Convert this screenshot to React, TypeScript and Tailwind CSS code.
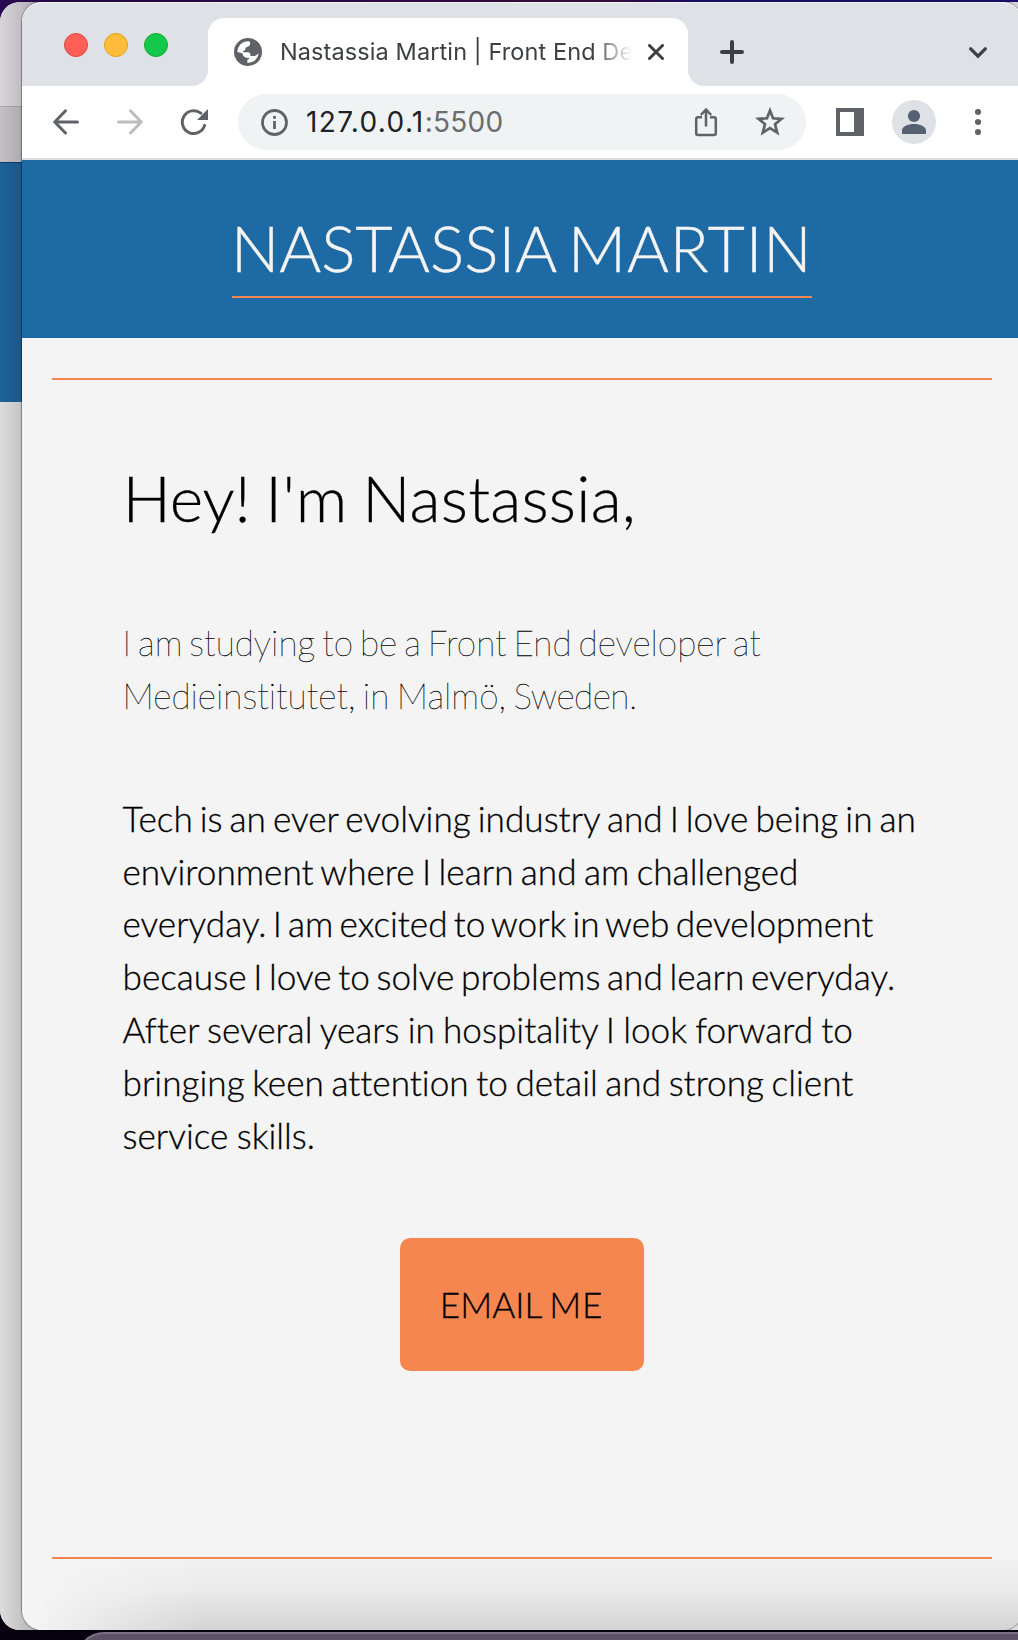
import React from "react";

function Globe() {
  return (
    <svg className="ml-[26px] size-7 shrink-0" viewBox="0 0 84 84">
      <circle cx="42" cy="42" r="42" fill="#5f6368" />
      <path
        fill="#fff"
        d="M10 42C11 24 24 10 43 10C50 10 50 19 45 24C41 28 35 26 34 31C35 37 31 38 27 39V43H42C48 44 50 48 49 54H60C66 54 69 50 74 46C73 58 64 68 54 72C49 74 43 75 40 74V65C44 65 46 62 45 59H36C29 58 27 52 25 46Z"
      />
      <path fill="#5f6368" d="M50 10C66 13 75 27 75 42C74 47 66 48 62 46C55 44 60 36 54 34C48 34 43 30 47 25C50 21 50 16 50 10Z" />
    </svg>
  );
}

function TabStrip() {
  return (
    <div className="flex h-[84px] bg-white">
      <div className="flex w-[186px] items-start gap-4 rounded-br-[16px] bg-[#dee1e6] pl-[42px] pt-[31px]">
        <span className="size-6 rounded-full border border-[#e2463f] bg-[#ff5f57]" />
        <span className="size-6 rounded-full border border-[#e1a116] bg-[#febc3a]" />
        <span className="size-6 rounded-full border border-[#12ac28] bg-[#14c84b]" />
      </div>
      <div className="w-[480px] bg-[linear-gradient(to_bottom,#dee1e6_60px,#fff_60px)] pt-4">
        <div className="flex h-[68px] items-center rounded-t-[16px] bg-white">
          <Globe />
          <div className="ml-[18px] w-[352px] overflow-hidden whitespace-nowrap text-[23.5px] leading-8 tracking-[0.1px] text-[#3c4043] [mask-image:linear-gradient(to_right,#000_312px,transparent_352px)]">
            Nastassia Martin | Front End Developer
          </div>
          <svg className="ml-4 size-4" viewBox="0 0 16 16" stroke="#3c4043" strokeWidth="3" strokeLinecap="round">
            <path d="M1.5 1.5 14.5 14.5M14.5 1.5 1.5 14.5" />
          </svg>
        </div>
      </div>
      <div className="flex grow items-start justify-between rounded-bl-[16px] bg-[#dee1e6] pl-8 pr-[35px] pt-[38px]">
        <svg className="size-6" viewBox="0 0 24 24" stroke="#3c4043" strokeWidth="4" strokeLinecap="round">
          <path d="M2 12H22M12 2V22" />
        </svg>
        <svg className="mt-[7px] h-[12px] w-[18px]" viewBox="0 0 18 12" fill="none" stroke="#3c4043" strokeWidth="3.2" strokeLinecap="round">
          <path d="M1.7 1.8 9 9.2 16.3 1.8" />
        </svg>
      </div>
    </div>
  );
}

function Toolbar() {
  return (
    <div className="flex h-[74px] items-start border-b-2 border-[#dadce0] bg-white pt-2">
      <svg className="ml-[31px] mt-[15px] size-[26px]" viewBox="0 0 26 26" fill="none" stroke="#5f6368" strokeWidth="3" strokeLinecap="round">
        <path d="M24.5 13H2M12.5 1.8 1.8 13 12.5 24" />
      </svg>
      <svg className="ml-[38px] mt-[15px] size-[26px]" viewBox="0 0 26 26" fill="none" stroke="#babcbe" strokeWidth="3" strokeLinecap="round">
        <path d="M1.5 13H24M13.5 1.8 24.2 13 13.5 24" />
      </svg>
      <svg className="ml-[37px] mt-[14px] h-[27px] w-[28px]" viewBox="0 0 28 27">
        <path d="M20.8 5.2A11.4 11.4 0 1 0 24.6 17.4" fill="none" stroke="#5f6368" strokeWidth="3" strokeLinecap="round" />
        <path d="M28 1V12H17Z" fill="#5f6368" />
      </svg>
      <div className="ml-[30px] flex h-14 w-[568px] items-center rounded-full bg-[#eff3f4]">
        <svg className="ml-[23px] mt-px size-[27px]" viewBox="0 0 27 27">
          <circle cx="13.5" cy="13.5" r="12" fill="none" stroke="#5f6368" strokeWidth="2.8" />
          <path d="M13.5 12V20M13.5 7V9.8" stroke="#5f6368" strokeWidth="2.8" />
        </svg>
        <div className="ml-[18px] grow text-[28px] leading-8 tracking-[1.35px] text-[#202124]">
          127.0.0.1<span className="tracking-[0.25px] text-[#6b6c6e]">:5500</span>
        </div>
        <svg className="size-[30px]" viewBox="0 0 30 30" fill="none" stroke="#5f6368" strokeWidth="2.5">
          <path d="M15 19.5V3M9.8 8 15 2.6 20.2 8" />
          <path d="M11 10.2H7Q5.2 10.2 5.2 12V26.2Q5.2 28 7 28H23Q24.8 28 24.8 26.2V12Q24.8 10.2 23 10.2H19" />
        </svg>
        <svg className="ml-[34px] mr-[21px] size-[30px]" viewBox="0 0 30 30">
          <path d="M15 3.5 18 11.3 26.5 11.8 20 17.2 22.2 25.6 15 21 7.8 25.6 10 17.2 3.5 11.8 12 11.3Z" fill="none" stroke="#5f6368" strokeWidth="2.7" />
        </svg>
      </div>
      <svg className="ml-[30px] mt-[14px] size-7" viewBox="0 0 28 28">
        <path fill="#5f6368" fillRule="evenodd" d="M0 0H28V28H0ZM4 4V24H18V4Z" />
      </svg>
      <svg className="ml-7 mt-1.5 size-11" viewBox="0 0 44 44" fill="#566073">
        <circle cx="22" cy="22" r="22" fill="#dee1e6" />
        <circle cx="22" cy="16" r="6.1" />
        <path d="M10 34V30.5C10 26.5 16 24 22 24S34 26.5 34 30.5V34Z" />
      </svg>
      <svg className="ml-[39px] mt-[15px] h-[26px] w-1.5" viewBox="0 0 6 26" fill="#5f6368">
        <circle cx="3" cy="3" r="3.1" />
        <circle cx="3" cy="13" r="3.1" />
        <circle cx="3" cy="23" r="3.1" />
      </svg>
    </div>
  );
}

function Page() {
  return (
    <div className="flex grow flex-col bg-[#f4f4f4] font-[Lato,sans-serif] font-light text-black antialiased [font-variant-ligatures:none]">
      <header className="flex h-[178px] items-start justify-center bg-[#1e6aa5] pt-10">
        <h1 className="w-[580px] whitespace-nowrap border-b-2 border-[#f58650] -indent-px text-[64px] leading-24 text-[#f4f4f4] [-webkit-text-stroke:0.4px_#f4f4f4] [word-spacing:-4.5px]">
          NASTASSIA <span className="tracking-[0.9px]">MARTIN</span>
        </h1>
      </header>
      <main className="mx-[30px] mt-10 flex h-[1181px] flex-col border-y-2 border-[#f58650] pl-[70.5px] pr-[71.5px] [-webkit-text-stroke:0.3px_#000]">
        <h2 className="mt-[70px] whitespace-nowrap text-[64px] leading-24 [word-spacing:-3px]">
          Hey! <span className="tracking-[0.6px]">I'm</span> <span className="tracking-[0.2px]">Nastassia,</span>
        </h2>
        <p className="mt-[70px] whitespace-nowrap text-[35.2px] leading-[52.8px] font-thin">
          <span className="[word-spacing:-3.1px]">I am studying to be a Front End developer at</span>
          <br />
          <span className="[word-spacing:-2.6px]">
            Medieinstitutet, in Malmö, <span className="tracking-[-0.5px]">Sweden.</span>
          </span>
        </p>
        <p className="mt-[70.2px] whitespace-nowrap text-[35.2px] leading-[52.8px]">
          <span className="[word-spacing:-2.55px]">Tech is an ever evolving industry and I love being in an</span>
          <br />
          <span className="[word-spacing:-2.2px]">environment where I learn and am challenged</span>
          <br />
          <span className="[word-spacing:-3.4px]">everyday. I am excited to work in web development</span>
          <br />
          <span className="[word-spacing:-2.9px]">because I love to solve problems and learn everyday.</span>
          <br />
          <span className="[word-spacing:-1.4px]">After several years in hospitality I look forward to</span>
          <br />
          <span className="[word-spacing:-2px]">bringing keen attention to detail and strong client</span>
          <br />
          <span className="[word-spacing:-1.2px]">service skills.</span>
        </p>
        <button className="mt-[76.9px] h-[133px] w-[244px] self-center rounded-[10px] bg-[#f58650] text-[35.2px] [word-spacing:-1.6px]">
          EMAIL <span className="tracking-[0.8px]">ME</span>
        </button>
      </main>
    </div>
  );
}

export default function App() {
  return (
    <div className="relative h-[1640px] w-[1018px] overflow-hidden bg-[linear-gradient(to_right,#270a50,#3b0c45_60%,#1d0d70_68%,#1d0d70)] font-[Inter,sans-serif]">
      <div className="absolute inset-x-0 bottom-0 h-16 bg-[#07010f]" />
      <div className="absolute left-0 top-[2px] flex h-[1628px] w-[1060px] flex-col overflow-hidden rounded-[20px] bg-[#dcdcdc]">
        <div className="h-[105px] border-b border-[#aaa7ad] bg-[#d8d5da]" />
        <div className="h-[55px] bg-[#c2bfc5]" />
        <div className="h-[240px] border-t border-[#093d70] bg-[#1e6298]" />
        <div className="grow bg-[#dcdcdc]" />
      </div>
      <div className="absolute left-0 top-[2px] h-[1628px] w-10 rounded-l-[20px] bg-linear-to-r from-transparent to-black/20" />
      <div className="absolute left-[22px] top-[2px] flex h-[1628px] w-[1000px] flex-col overflow-hidden rounded-[20px] shadow-[0_0_1px_1px_rgba(0,0,0,0.35)]">
        <TabStrip />
        <Toolbar />
        <Page />
        <div className="absolute inset-x-0 top-0 h-full rounded-[20px] shadow-[inset_0_1px_0_rgba(255,255,255,0.65)]" />
        <div className="absolute inset-x-0 bottom-0 h-20 bg-linear-to-b from-transparent via-black/4 to-black/13 [mask-image:linear-gradient(to_right,transparent_10px,#000_180px)]" />
      </div>
      <div className="absolute left-[76px] top-[1632px] h-24 w-[1060px] rounded-[28px] border-2 border-[#777080] bg-[#5b5268]" />
    </div>
  );
}
